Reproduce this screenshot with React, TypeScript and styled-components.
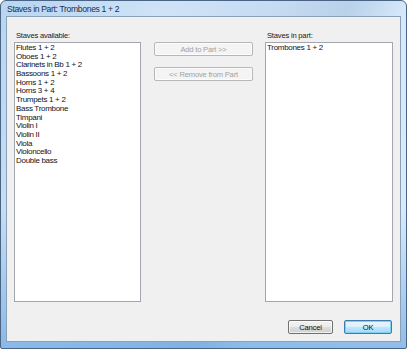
import { createGlobalStyle, styled } from "styled-components";

const GlobalStyle = createGlobalStyle`
  html, body {
    margin: 0;
    padding: 0;
    background: #fff;
  }
  body {
    font-family: "Liberation Sans", "DejaVu Sans", sans-serif;
    font-size: 8px;
    color: #000;
  }
`;

const Window = styled.div`
  width: 407px;
  height: 349px;
  box-sizing: border-box;
  display: flex;
  flex-direction: column;
  padding: 0 5px 6px 5px;
  border: 1px solid #4a6584;
  border-radius: 6px 6px 2px 2px;
  background:
    linear-gradient(180deg, rgba(255, 255, 255, 0) 60%, rgba(80, 150, 220, 0.55) 100%),
    linear-gradient(115deg, #b8d5f1 0%, #cfe3f7 30%, #c6dcf3 48%, #b9d1ea 62%, #d6e8fa 72%, #dcebfa 100%);
  overflow: hidden;
`;

const TitleBar = styled.div`
  height: 17px;
  display: flex;
  align-items: center;
  padding-left: 1px;
  font-size: 8.6px;
  color: #1b2f48;
  letter-spacing: -0.35px;
  white-space: nowrap;
`;

const Client = styled.div`
  flex: 1;
  display: flex;
  flex-direction: column;
  background: #f0f0f0;
  border: 1px solid #8aa0b8;
  padding: 14px 7px 7px 7px;
`;

const Columns = styled.div`
  display: grid;
  grid-template-columns: 127px 1fr 128px;
`;

const Column = styled.div`
  display: flex;
  flex-direction: column;
`;

const Label = styled.div`
  height: 9px;
  line-height: 9px;
  margin: 0 0 2px 2px;
  font-size: 7.6px;
  letter-spacing: -0.2px;
  color: #1a1a1a;
`;

const ListBox = styled.div`
  height: 260px;
  box-sizing: border-box;
  background: #fff;
  border: 1px solid #a3a7ad;
  padding: 1px 1px;
`;

const Item = styled.div`
  height: 8.7px;
  line-height: 8.7px;
  font-size: 8px;
  letter-spacing: -0.3px;
  white-space: nowrap;
  color: #0c1426;
`;

const Middle = styled.div`
  display: flex;
  flex-direction: column;
  gap: 11px;
  padding: 11px 0 0 13px;
`;

const Button = styled.button<{ $primary?: boolean }>`
  box-sizing: border-box;
  height: 14px;
  padding: 0;
  font-family: inherit;
  font-size: 7.6px;
  letter-spacing: -0.2px;
  white-space: nowrap;
  border-radius: 2px;
  cursor: default;
  color: ${(p) => (p.disabled ? "#a3a3a3" : "#111")};
  border: 1px solid ${(p) => (p.disabled ? "#b5b8bb" : p.$primary ? "#3d7bad" : "#707070")};
  background: ${(p) =>
    p.disabled
      ? "#f4f4f4"
      : p.$primary
        ? "linear-gradient(180deg, #eaf6fd 0%, #d9f0fc 50%, #bee6fd 51%, #a7d9f5 100%)"
        : "linear-gradient(180deg, #f2f2f2 0%, #ebebeb 50%, #dddddd 51%, #cfcfcf 100%)"};
  box-shadow: ${(p) => (p.$primary ? "inset 0 0 0 1px #7ed0f5" : "inset 0 0 0 1px rgba(255,255,255,0.7)")};
`;

const MoveButton = styled(Button)`
  width: 99px;
`;

const Footer = styled.div`
  display: flex;
  justify-content: flex-end;
  gap: 11px;
  margin-top: 18px;
  padding-right: 1px;
`;

const FooterButton = styled(Button)`
  width: 45px;
`;

const OkButton = styled(Button)`
  width: 48px;
`;

const available = [
  "Flutes 1 + 2",
  "Oboes 1 + 2",
  "Clarinets in Bb 1 + 2",
  "Bassoons 1 + 2",
  "Horns 1 + 2",
  "Horns 3 + 4",
  "Trumpets 1 + 2",
  "Bass Trombone",
  "Timpani",
  "Violin I",
  "Violin II",
  "Viola",
  "Violoncello",
  "Double bass",
];

const inPart = ["Trombones 1 + 2"];

export default function App() {
  return (
    <>
      <GlobalStyle />
      <Window>
        <TitleBar>Staves in Part: Trombones 1 + 2</TitleBar>
        <Client>
          <Columns>
            <Column>
              <Label>Staves available:</Label>
              <ListBox>
                {available.map((s) => (
                  <Item key={s}>{s}</Item>
                ))}
              </ListBox>
            </Column>
            <Middle>
              <MoveButton disabled>Add to Part &gt;&gt;</MoveButton>
              <MoveButton disabled>&lt;&lt; Remove from Part</MoveButton>
            </Middle>
            <Column>
              <Label>Staves in part:</Label>
              <ListBox>
                {inPart.map((s) => (
                  <Item key={s}>{s}</Item>
                ))}
              </ListBox>
            </Column>
          </Columns>
          <Footer>
            <FooterButton>Cancel</FooterButton>
            <OkButton $primary>OK</OkButton>
          </Footer>
        </Client>
      </Window>
    </>
  );
}
